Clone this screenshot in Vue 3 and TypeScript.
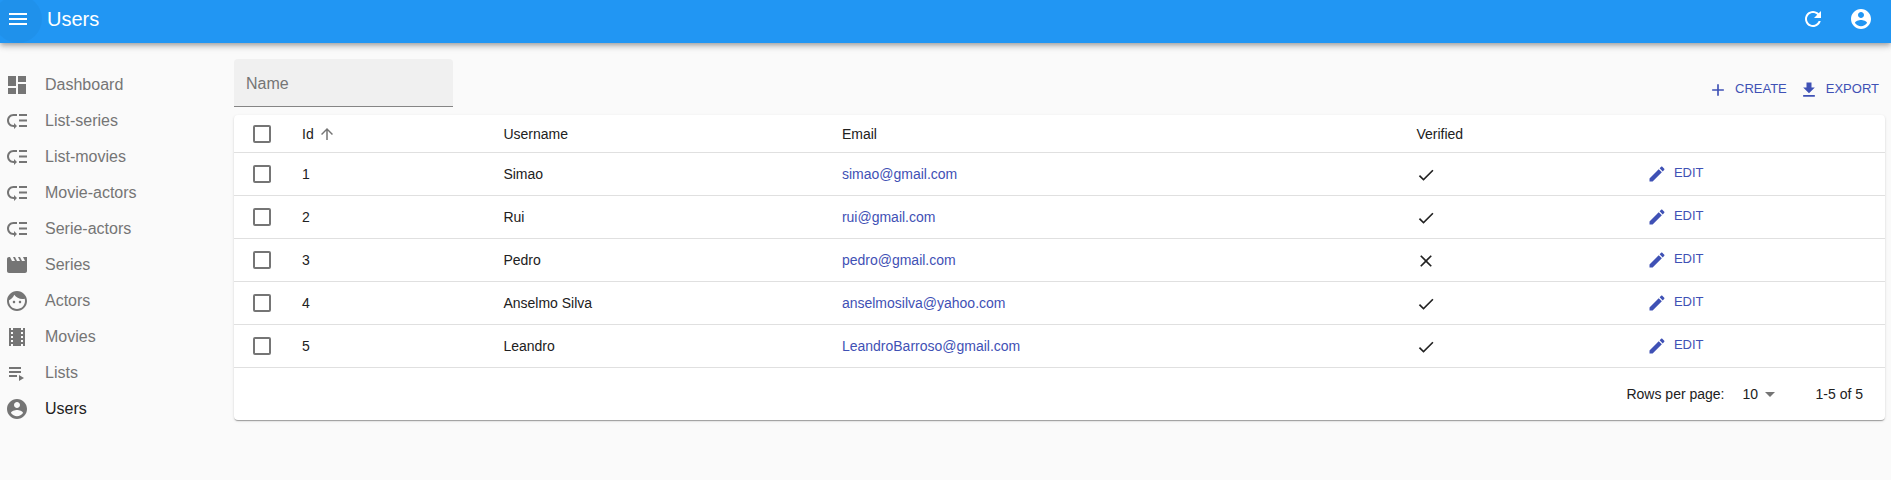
<script setup lang="ts">
import { ref, computed } from 'vue'

interface MenuItem {
  label: string
  icon: string
}

interface User {
  id: number
  username: string
  email: string
  verified: boolean
}

const icons: Record<string, string> = {
  menu: 'M3 18h18v-2H3v2zm0-5h18v-2H3v2zm0-7v2h18V6H3z',
  refresh:
    'M17.65 6.35C16.2 4.9 14.21 4 12 4c-4.42 0-7.99 3.58-7.99 8s3.57 8 7.99 8c3.73 0 6.84-2.55 7.73-6h-2.08c-.82 2.33-3.04 4-5.65 4-3.31 0-6-2.69-6-6s2.69-6 6-6c1.66 0 3.14.69 4.22 1.78L13 11h7V4l-2.35 2.35z',
  account:
    'M12 2C6.48 2 2 6.48 2 12s4.48 10 10 10 10-4.48 10-10S17.52 2 12 2zm0 3c1.66 0 3 1.34 3 3s-1.34 3-3 3-3-1.34-3-3 1.34-3 3-3zm0 14.2c-2.5 0-4.71-1.28-6-3.22.03-1.99 4-3.08 6-3.08 1.99 0 5.97 1.09 6 3.08-1.29 1.94-3.5 3.22-6 3.22z',
  dashboard: 'M3 13h8V3H3v10zm0 8h8v-6H3v6zm10 0h8V11h-8v10zm0-18v6h8V3h-8z',
  priority:
    'M14 5h8v2h-8zm0 5.5h8v2h-8zm0 5.5h8v2h-8zM2 11.5C2 15.08 4.92 18 8.5 18H9v2l3-3-3-3v2h-.5C6.02 16 4 13.98 4 11.5S6.02 7 8.5 7H12V5H8.5C4.92 5 2 7.92 2 11.5z',
  movie:
    'M18 4l2 4h-3l-2-4h-2l2 4h-3l-2-4H8l2 4H7L5 4H4c-1.1 0-1.99.9-1.99 2L2 18c0 1.1.9 2 2 2h16c1.1 0 2-.9 2-2V4h-4z',
  face: 'M9 11.75c-.69 0-1.25.56-1.25 1.25s.56 1.25 1.25 1.25 1.25-.56 1.25-1.25-.56-1.25-1.25-1.25zm6 0c-.69 0-1.25.56-1.25 1.25s.56 1.25 1.25 1.25 1.25-.56 1.25-1.25-.56-1.25-1.25-1.25zM12 2C6.48 2 2 6.48 2 12s4.48 10 10 10 10-4.48 10-10S17.52 2 12 2zm0 18c-4.41 0-8-3.59-8-8 0-.29.02-.58.05-.86 2.36-1.05 4.23-2.98 5.21-5.37C11.07 8.33 14.05 10 17.42 10c.78 0 1.53-.09 2.25-.26.21.71.33 1.47.33 2.26 0 4.41-3.59 8-8 8z',
  film: 'M18 3v2h-2V3H8v2H6V3H4v18h2v-2h2v2h8v-2h2v2h2V3h-2zM8 17H6v-2h2v2zm0-4H6v-2h2v2zm0-4H6V7h2v2zm10 8h-2v-2h2v2zm0-4h-2v-2h2v2zm0-4h-2V7h2v2z',
  playlist: 'M4 10h12v2H4zm0-4h12v2H4zm0 8h8v2H4zm10 0v6l5-3z',
  add: 'M19 13h-6v6h-2v-6H5v-2h6V5h2v6h6v2z',
  download: 'M19 9h-4V3H9v6H5l7 7 7-7zM5 18v2h14v-2H5z',
  up: 'M4 12l1.41 1.41L11 7.83V20h2V7.83l5.58 5.59L20 12l-8-8-8 8z',
  check: 'M9 16.17L4.83 12l-1.42 1.41L9 19 21 7l-1.41-1.41z',
  close:
    'M19 6.41L17.59 5 12 10.59 6.41 5 5 6.41 10.59 12 5 17.59 6.41 19 12 13.41 17.59 19 19 17.59 13.41 12z',
  edit: 'M3 17.25V21h3.75L17.81 9.94l-3.75-3.75L3 17.25zM20.71 7.04c.39-.39.39-1.02 0-1.41l-2.34-2.34c-.39-.39-1.02-.39-1.41 0l-1.83 1.83 3.75 3.75 1.83-1.83z',
  dropdown: 'M7 10l5 5 5-5z',
}

const menu: MenuItem[] = [
  { label: 'Dashboard', icon: 'dashboard' },
  { label: 'List-series', icon: 'priority' },
  { label: 'List-movies', icon: 'priority' },
  { label: 'Movie-actors', icon: 'priority' },
  { label: 'Serie-actors', icon: 'priority' },
  { label: 'Series', icon: 'movie' },
  { label: 'Actors', icon: 'face' },
  { label: 'Movies', icon: 'film' },
  { label: 'Lists', icon: 'playlist' },
  { label: 'Users', icon: 'account' },
]

const users: User[] = [
  { id: 1, username: 'Simao', email: 'simao@gmail.com', verified: true },
  { id: 2, username: 'Rui', email: 'rui@gmail.com', verified: true },
  { id: 3, username: 'Pedro', email: 'pedro@gmail.com', verified: false },
  { id: 4, username: 'Anselmo Silva', email: 'anselmosilva@yahoo.com', verified: true },
  { id: 5, username: 'Leandro', email: 'LeandroBarroso@gmail.com', verified: true },
]

const current = ref('Users')
const filter = ref('')
const ascending = ref(true)
const perPage = ref(10)
const selected = ref<number[]>([])

const rows = computed(() =>
  users
    .filter((u) => u.username.toLowerCase().includes(filter.value.toLowerCase()))
    .sort((a, b) => (ascending.value ? a.id - b.id : b.id - a.id)),
)

const allSelected = computed({
  get: () => rows.value.length > 0 && selected.value.length === rows.value.length,
  set: (on: boolean) => {
    selected.value = on ? rows.value.map((u) => u.id) : []
  },
})
</script>

<template>
  <div class="app">
    <header class="bar">
      <button class="round tinted" type="button" aria-label="Toggle menu">
        <svg class="icon" viewBox="0 0 24 24"><path :d="icons.menu" /></svg>
      </button>
      <h1 class="title">{{ current }}</h1>
      <button class="round" type="button" aria-label="Refresh">
        <svg class="icon" viewBox="0 0 24 24"><path :d="icons.refresh" /></svg>
      </button>
      <button class="round" type="button" aria-label="Profile">
        <svg class="icon" viewBox="0 0 24 24"><path :d="icons.account" /></svg>
      </button>
    </header>

    <div class="body">
      <nav class="side">
        <a
          v-for="item in menu"
          :key="item.label"
          href="#"
          class="item"
          :class="{ active: item.label === current }"
          @click.prevent="current = item.label"
        >
          <svg class="icon" viewBox="0 0 24 24"><path :d="icons[item.icon]" /></svg>
          <span>{{ item.label }}</span>
        </a>
      </nav>

      <main class="main">
        <div class="tools">
          <input v-model="filter" class="filter" type="text" placeholder="Name" aria-label="Name" />
          <div class="actions">
            <a href="#" class="action">
              <svg class="icon small" viewBox="0 0 24 24"><path :d="icons.add" /></svg>
              <span>CREATE</span>
            </a>
            <button type="button" class="action">
              <svg class="icon small" viewBox="0 0 24 24"><path :d="icons.download" /></svg>
              <span>EXPORT</span>
            </button>
          </div>
        </div>

        <section class="card">
          <table class="grid">
            <colgroup>
              <col class="c-check" />
              <col class="c-id" />
              <col class="c-name" />
              <col class="c-email" />
              <col class="c-verified" />
              <col />
            </colgroup>
            <thead>
              <tr>
                <th class="pick">
                  <input v-model="allSelected" type="checkbox" class="box" aria-label="Select all" />
                </th>
                <th>
                  <button type="button" class="sort" @click="ascending = !ascending">
                    <span>Id</span>
                    <svg class="icon arrow" :class="{ down: !ascending }" viewBox="0 0 24 24">
                      <path :d="icons.up" />
                    </svg>
                  </button>
                </th>
                <th>Username</th>
                <th>Email</th>
                <th>Verified</th>
                <th></th>
              </tr>
            </thead>
            <tbody>
              <tr v-for="u in rows" :key="u.id">
                <td class="pick">
                  <input
                    v-model="selected"
                    type="checkbox"
                    class="box"
                    :value="u.id"
                    :aria-label="`Select ${u.username}`"
                  />
                </td>
                <td>{{ u.id }}</td>
                <td>{{ u.username }}</td>
                <td><a class="mail" :href="`mailto:${u.email}`">{{ u.email }}</a></td>
                <td class="flag">
                  <svg
                    class="icon small"
                    viewBox="0 0 24 24"
                    role="img"
                    :aria-label="u.verified ? 'Yes' : 'No'"
                  >
                    <path :d="u.verified ? icons.check : icons.close" />
                  </svg>
                </td>
                <td>
                  <a href="#" class="action">
                    <svg class="icon small" viewBox="0 0 24 24"><path :d="icons.edit" /></svg>
                    <span>EDIT</span>
                  </a>
                </td>
              </tr>
            </tbody>
          </table>

          <footer class="pager">
            <label for="per-page">Rows per page:</label>
            <div class="picker">
              <select id="per-page" v-model="perPage">
                <option :value="5">5</option>
                <option :value="10">10</option>
                <option :value="25">25</option>
              </select>
              <svg class="icon caret" viewBox="0 0 24 24"><path :d="icons.dropdown" /></svg>
            </div>
            <span>1-{{ rows.length }} of {{ rows.length }}</span>
          </footer>
        </section>
      </main>
    </div>
  </div>
</template>

<style>
html {
  background: #fafafa;
}
body {
  margin: 0;
}
</style>

<style scoped>
.app {
  min-height: 100vh;
  overflow: hidden;
  background: #fafafa;
  color: #212121;
  font: 14px/20px "Liberation Sans", Arial, sans-serif;
}
.app *,
.app {
  box-sizing: border-box;
}
button,
input,
select {
  margin: 0;
  padding: 0;
  border: 0;
  background: none;
  color: inherit;
  font: inherit;
}
button,
select {
  cursor: pointer;
}
a {
  text-decoration: none;
}
.icon {
  display: block;
  flex: none;
  width: 24px;
  height: 24px;
  fill: currentColor;
}
.icon.small {
  width: 20px;
  height: 20px;
}

.bar {
  display: flex;
  align-items: center;
  height: 43px;
  padding: 0 6px 5px 0;
  background: #2196f3;
  color: #fff;
  box-shadow:
    0 2px 4px -1px rgba(0, 0, 0, 0.2),
    0 4px 5px 0 rgba(0, 0, 0, 0.14),
    0 1px 10px 0 rgba(0, 0, 0, 0.12);
}
.round {
  display: flex;
  flex: none;
  align-items: center;
  justify-content: center;
  width: 48px;
  height: 48px;
  border-radius: 50%;
}
.tinted {
  margin-left: -6px;
  background: rgba(0, 0, 0, 0.03);
}
.title {
  flex: 1;
  margin: 0 0 0 5px;
  font-size: 20px;
  font-weight: 400;
  line-height: 32px;
}

.body {
  display: flex;
}
.side {
  flex: none;
  width: 234px;
  padding: 24px 5px 0;
}
.item {
  display: flex;
  align-items: center;
  gap: 16px;
  height: 36px;
  color: #757575;
  font-size: 16px;
  line-height: 24px;
}
.item.active span {
  color: #212121;
}

.main {
  flex: 1;
  min-width: 0;
  padding: 16px 6px 0 0;
}
.tools {
  display: flex;
  align-items: flex-end;
  justify-content: space-between;
  margin-bottom: 8px;
}
.filter {
  width: 219px;
  height: 48px;
  padding: 2px 12px 0;
  border-bottom: 1px solid #858585;
  border-radius: 4px 4px 0 0;
  background: #f0f0f0;
  font-size: 16px;
  outline: none;
}
.filter::placeholder {
  color: #757575;
  opacity: 1;
}
.actions {
  display: flex;
  padding-bottom: 2px;
}
.action {
  display: inline-flex;
  align-items: center;
  gap: 7px;
  height: 30px;
  padding: 0 6px;
  color: #3f51b5;
  font-size: 13px;
}
.action span {
  padding-bottom: 2px;
}

.card {
  border-radius: 4px;
  background: #fff;
  box-shadow:
    0 2px 1px -1px rgba(0, 0, 0, 0.2),
    0 1px 1px 0 rgba(0, 0, 0, 0.14),
    0 1px 3px 0 rgba(0, 0, 0, 0.12);
}
.grid {
  width: 100%;
  border-spacing: 0;
  table-layout: fixed;
}
.c-check {
  width: 52px;
}
.c-id {
  width: 12.2%;
}
.c-name {
  width: 20.5%;
}
.c-email {
  width: 34.8%;
}
.c-verified {
  width: 13.6%;
}
th,
td {
  height: 43px;
  padding: 0 16px;
  border-bottom: 1px solid #e0e0e0;
  font-weight: 400;
  text-align: left;
  vertical-align: middle;
}
th {
  height: 38px;
}
.pick {
  padding: 0 0 0 19px;
}
.box {
  display: block;
  width: 18px;
  height: 18px;
  border: 2px solid #757575;
  border-radius: 2px;
  appearance: none;
}
.box:checked {
  border-color: #3f51b5;
  background: #3f51b5;
}
.sort {
  display: flex;
  align-items: center;
  gap: 4px;
}
.arrow {
  width: 18px;
  height: 18px;
  color: #757575;
}
.arrow.down {
  transform: rotate(180deg);
}
.mail {
  color: #3f51b5;
}
.flag {
  padding-top: 2px;
}
td .action {
  display: flex;
  width: max-content;
}

.pager {
  display: flex;
  align-items: center;
  justify-content: flex-end;
  height: 52px;
  padding-right: 22px;
}
.picker {
  position: relative;
  margin: 0 34px 0 10px;
}
.picker select {
  width: 47px;
  height: 24px;
  padding-left: 8px;
  appearance: none;
}
.caret {
  position: absolute;
  top: 0;
  right: 0;
  color: #757575;
  pointer-events: none;
}
</style>
